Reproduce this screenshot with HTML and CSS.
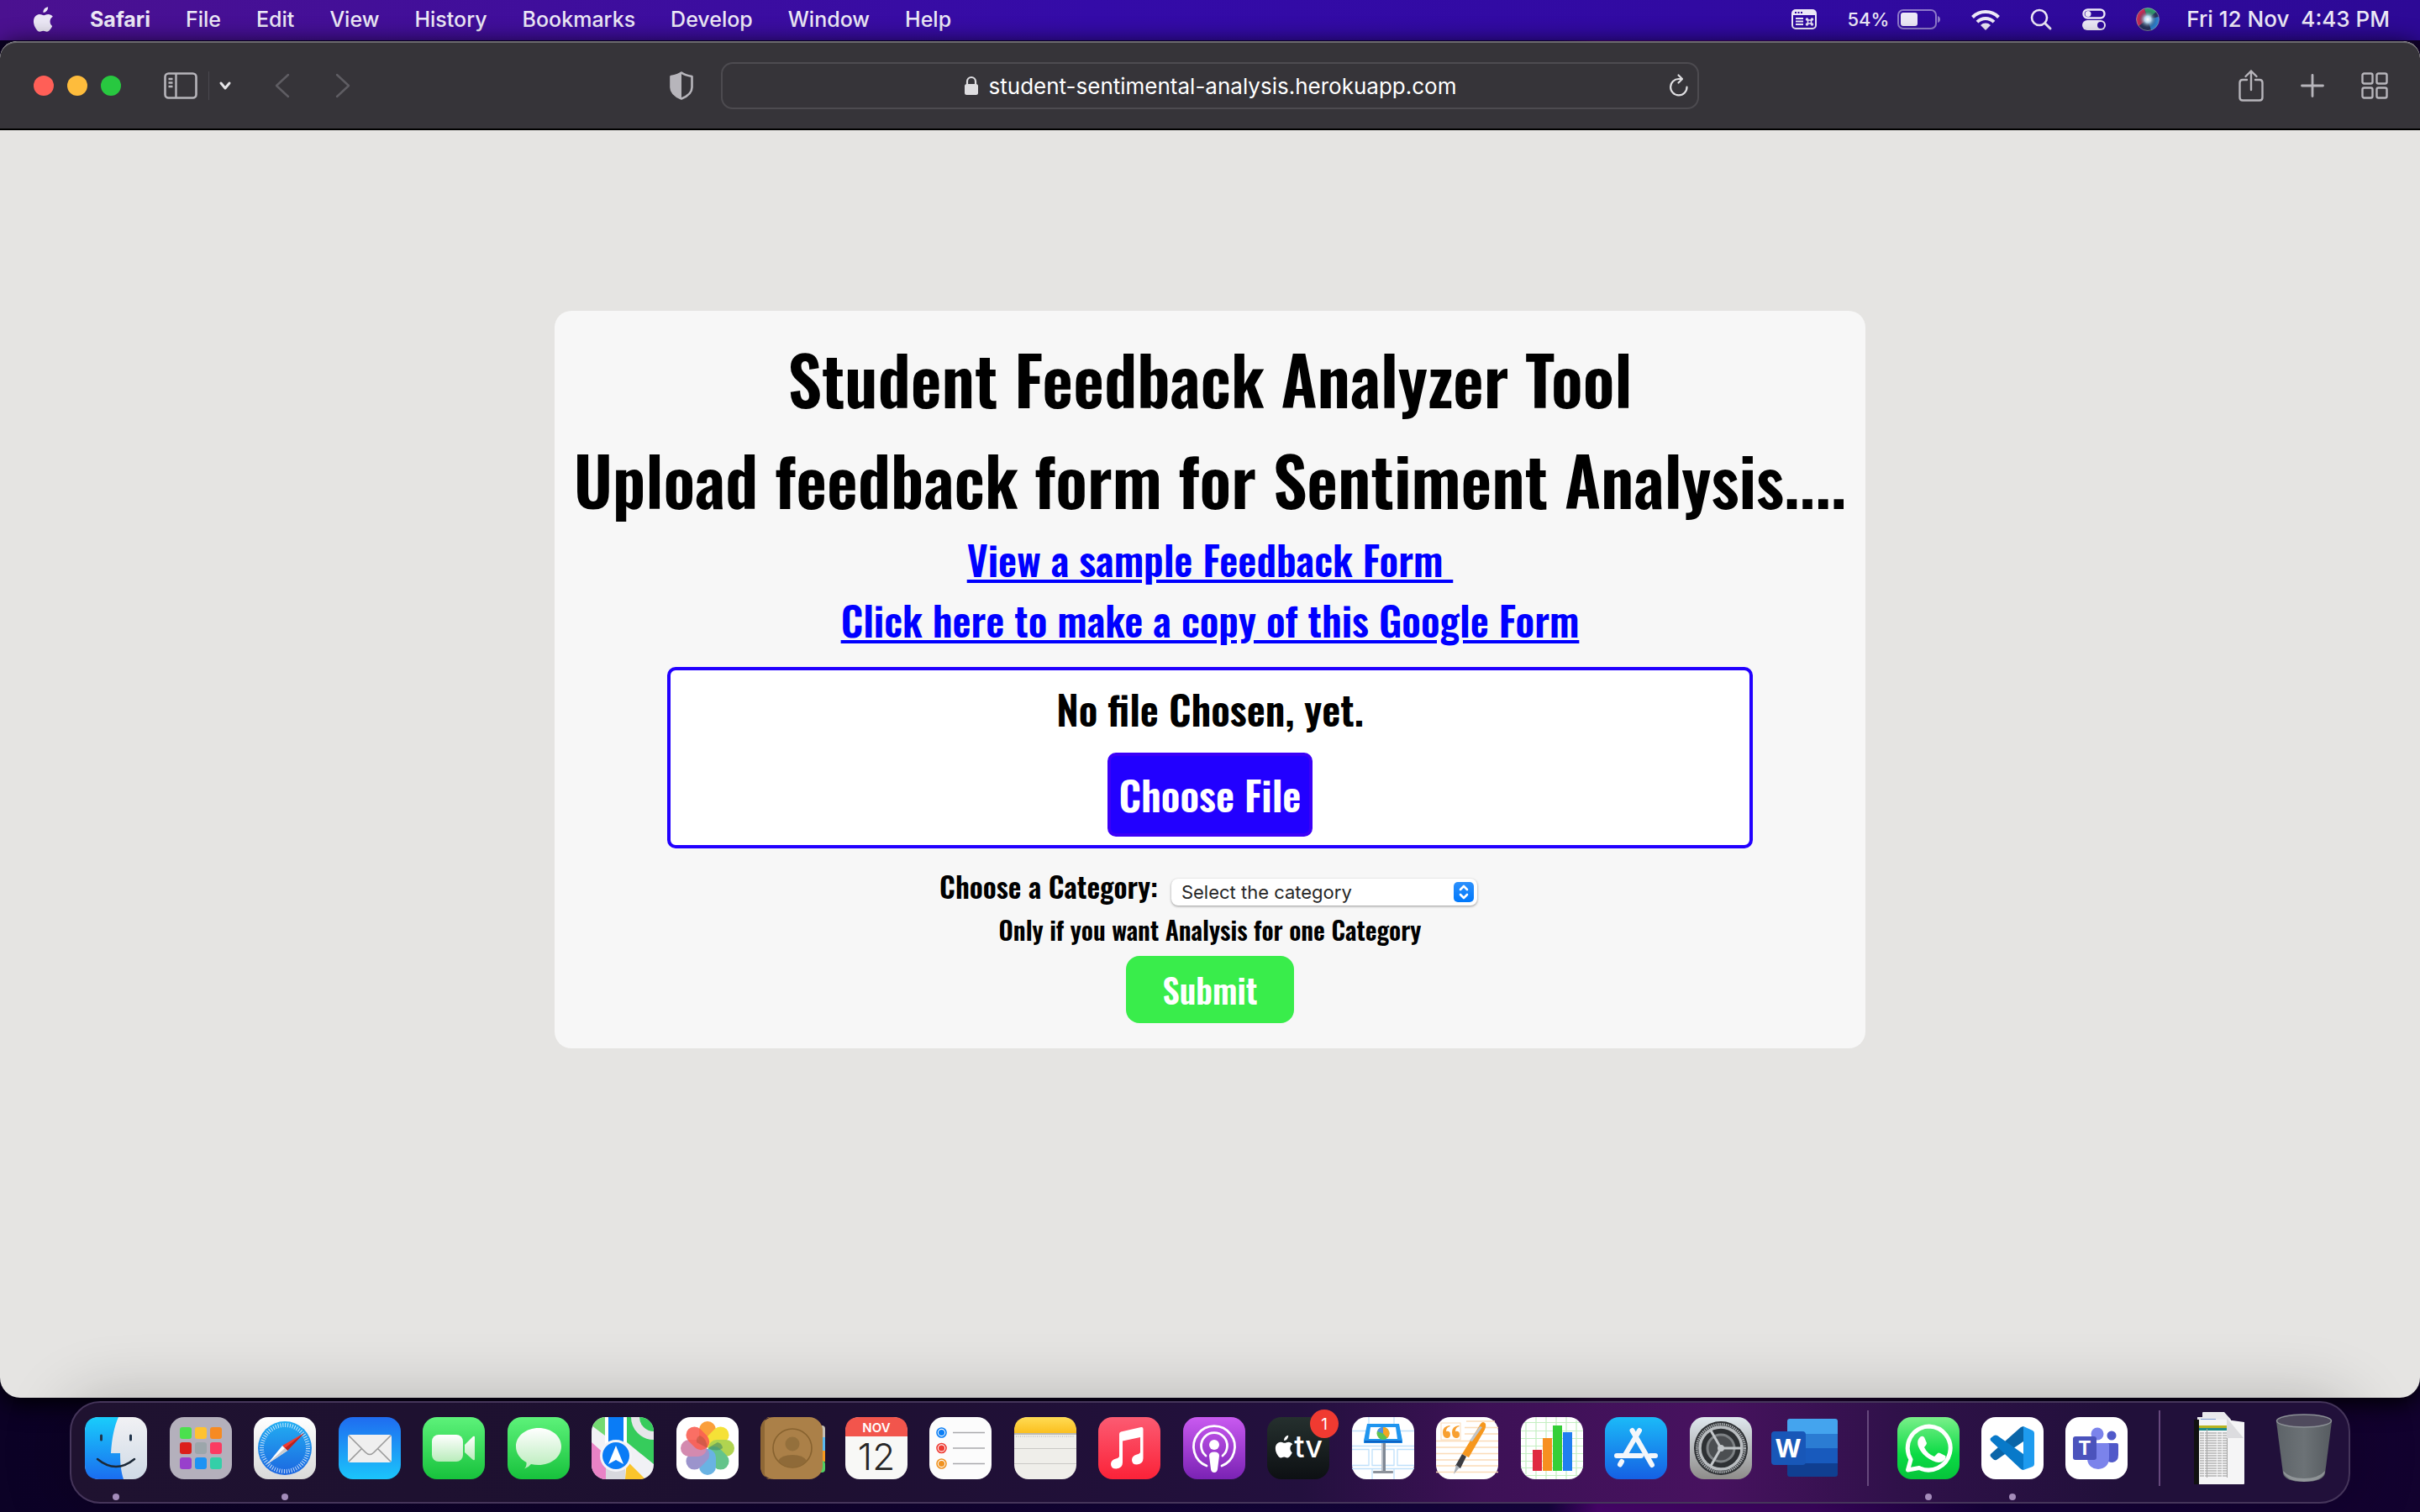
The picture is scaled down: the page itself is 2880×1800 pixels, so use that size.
FILE: index.html
```html
<!DOCTYPE html>
<html lang="en">
<head>
<meta charset="utf-8">
<title>Student Feedback Analyzer Tool</title>
<link rel="stylesheet" href="styles.css">
</head>
<body>
<header class="menubar">
  <nav class="menus" aria-label="Menu bar">
    <svg class="apple" width="26" height="32" viewBox="0 0 28 34"><path fill="currentColor" d="M19.500 1c.2 2-.6 3.900-1.700 5.200-1.200 1.300-2.800 2.200-4.400 2.100-.2-1.900.7-3.900 1.700-5 1.200-1.300 3-2.200 4.400-2.300zM25 25.500c-.7 1.600-1.100 2.300-2 3.700-1.300 2-3.100 3.800-5.100 3.800-1.700 0-2.200-1.100-4.400-1.100-2.300 0-2.800 1.100-4.500 1.100-2.100 0-3.700-2-4.900-3.900-3.500-5.300-3.900-11.500-1.700-14.800 1.500-2.400 4-3.800 6.200-3.800 2.300 0 3.800 1.300 5.700 1.300 1.900 0 3-1.300 5.700-1.300 2 0 4.200 1.100 5.700 3-5 2.800-4.200 9.900-.7 12z"/></svg>
    <button class="menu menu-app">Safari</button>
    <button class="menu">File</button>
    <button class="menu">Edit</button>
    <button class="menu">View</button>
    <button class="menu">History</button>
    <button class="menu">Bookmarks</button>
    <button class="menu">Develop</button>
    <button class="menu">Window</button>
    <button class="menu">Help</button>
  </nav>
  <div class="status">
    <svg width="30" height="24" viewBox="0 0 30 24"><rect x="1" y="1" width="28" height="22" rx="4" fill="none" stroke="currentColor" stroke-width="2"/><path fill="currentColor" d="M1 7V4q0-3 3-3h22q3 0 3 3v3z"/><path stroke="#300a9c" stroke-width="2" d="M4 4h2M7.500 4h2M11 4h2"/><path stroke="currentColor" stroke-width="2" d="M5 11h9M5 14.500h9M5 18h9"/><path fill="none" stroke="currentColor" stroke-width="1.500" d="M19.500 13h4v4h-4zM19.500 13h-1a1 1 0 1 1 1-1zM23.500 13v-1a1 1 0 1 1 1 1zM23.500 17h1a1 1 0 1 1-1 1zM19.500 17v1a1 1 0 1 1-1-1z"/></svg>
    <span class="battery"><span>54%</span><svg width="52" height="24" viewBox="0 0 52 24"><rect x="1" y="1" width="45" height="22" rx="6" fill="none" stroke="currentColor" stroke-opacity=".5" stroke-width="2"/><rect x="4" y="4" width="20" height="16" rx="3" fill="currentColor"/><path fill="currentColor" fill-opacity=".5" d="M48 8q3 1 3 4t-3 4z"/></svg></span>
    <svg width="34" height="25" viewBox="0 0 34 25"><g fill="none" stroke="currentColor" stroke-width="4"><path d="M1.500 9.500a22 22 0 0 1 31 0"/><path d="M7 15.200a14.200 14.200 0 0 1 20 0"/></g><path fill="currentColor" d="M11 19a8.600 8.600 0 0 1 12 0l-6 6z"/></svg>
    <svg width="26" height="26" viewBox="0 0 26 26"><circle cx="11" cy="11" r="9" fill="none" stroke="currentColor" stroke-width="2.600"/><path stroke="currentColor" stroke-width="3" stroke-linecap="round" d="m18 18 6 6"/></svg>
    <svg width="28" height="26" viewBox="0 0 28 26"><rect x="1.500" y="1.500" width="25" height="10" rx="5" fill="none" stroke="currentColor" stroke-width="2.400"/><circle cx="7" cy="6.500" r="3.500" fill="currentColor"/><rect y="14" width="28" height="12" rx="6" fill="currentColor"/><circle cx="22" cy="20" r="4" fill="#300a9c"/></svg>
    <svg width="28" height="28" viewBox="0 0 28 28"><defs><radialGradient id="siri"><stop offset="0" stop-color="#fff"/><stop offset=".35" stop-color="#b9d8f0"/><stop offset="1" stop-color="#234" stop-opacity="0"/></radialGradient></defs><circle cx="14" cy="14" r="14" fill="#26325c"/><path fill="#c32c55" d="M14 14 3 22A14 14 0 0 1 10 1z"/><path fill="#2f9a6c" d="M14 14 10 1a14 14 0 0 1 14 4z"/><path fill="#2b7fd0" d="m14 14 13-3a14 14 0 0 1-9 16z"/><circle cx="14" cy="14" r="11" fill="url(#siri)"/><circle cx="14" cy="14" r="13.500" fill="none" stroke="#c9b7e8" stroke-opacity=".5"/></svg>
    <time class="clock"><span>Fri 12 Nov</span><span>4:43 PM</span></time>
  </div>
</header>

<div class="window">
  <div class="toolbar">
    <div class="tools-left">
      <div class="lights"><button class="light close" aria-label="Close"></button><button class="light minimise" aria-label="Minimise"></button><button class="light zoom" aria-label="Zoom"></button></div>
      <button class="tool sidebar-tool" aria-label="Sidebar"><svg width="40" height="32" viewBox="0 0 40 32"><rect x="1.500" y="1.500" width="37" height="29" rx="4" fill="none" stroke="currentColor" stroke-width="2.600"/><path stroke="currentColor" stroke-width="2.400" d="M14.500 2v28M5.500 8h5M5.500 12.500h5M5.500 17h5"/></svg></button>
      <button class="tool chevron-tool" aria-label="Tab groups"><svg width="14" height="10" viewBox="0 0 14 10"><path fill="none" stroke="#e6e5e8" stroke-width="3" stroke-linecap="round" stroke-linejoin="round" d="m2 2 5 6 5-6"/></svg></button>
      <button class="tool dim back-tool" aria-label="Back"><svg width="18" height="30" viewBox="0 0 18 30"><path fill="none" stroke="currentColor" stroke-width="2.400" stroke-linecap="round" stroke-linejoin="round" d="M16 2 2 15l14 13"/></svg></button>
      <button class="tool dim" aria-label="Forward"><svg width="18" height="30" viewBox="0 0 18 30"><path fill="none" stroke="currentColor" stroke-width="2.400" stroke-linecap="round" stroke-linejoin="round" d="m2 2 14 13L2 28"/></svg></button>
      <button class="tool shield" aria-label="Privacy report"><svg width="28" height="34" viewBox="0 0 28 34"><path fill="none" stroke="currentColor" stroke-width="2.600" stroke-linejoin="round" d="M14 1.500c3 2.300 7 3.500 12.500 4.500v13c0 6-5 10.500-12.500 13.500C6.500 29.500 1.500 25 1.500 19V6C7 5 11 3.800 14 1.500z"/><path fill="currentColor" d="M14 1.500v31C6.500 29.500 1.500 25 1.500 19V6C7 5 11 3.800 14 1.500z"/></svg></button>
    </div>
    <div class="address">
      <svg width="18" height="24" viewBox="0 0 18 24"><path fill="none" stroke="#dedde0" stroke-width="2.200" d="M4 12V7a5 5 0 0 1 10 0v5"/><rect x="1" y="10" width="16" height="13" rx="2.500" fill="#dedde0"/></svg>
      <span>student-sentimental-analysis.herokuapp.com</span>
      <button class="tool reload" aria-label="Reload"><svg width="24" height="28" viewBox="0 0 24 28"><path fill="none" stroke="#dedde0" stroke-width="2.200" stroke-linecap="round" stroke-linejoin="round" d="M21.500 15.500A9.700 9.700 0 1 1 12 6h3.500M11.500 1.500 16 6l-4.500 4.500"/></svg></button>
    </div>
    <div class="tools-right">
      <button class="tool" aria-label="Share"><svg width="30" height="38" viewBox="0 0 30 38"><path fill="none" stroke="currentColor" stroke-width="2.400" stroke-linecap="round" stroke-linejoin="round" d="M10 12H5q-3.500 0-3.500 3.500V33q0 3.500 3.500 3.500h20q3.500 0 3.500-3.500V15.500Q28.500 12 25 12h-5M15 24V1.500M8.500 8 15 1.500 21.500 8"/></svg></button>
      <button class="tool" aria-label="New tab"><svg width="28" height="28" viewBox="0 0 28 28"><path stroke="currentColor" stroke-width="2.800" stroke-linecap="round" d="M14 1.500v25M1.500 14h25"/></svg></button>
      <button class="tool" aria-label="Tab overview"><svg width="32" height="32" viewBox="0 0 32 32"><g fill="none" stroke="currentColor" stroke-width="2.400"><rect x="1.500" y="1.500" width="12" height="12" rx="2"/><rect x="18.500" y="1.500" width="12" height="12" rx="2"/><rect x="1.500" y="18.500" width="12" height="12" rx="2"/><rect x="18.500" y="18.500" width="12" height="12" rx="2"/></g></svg></button>
    </div>
  </div>

  <main class="page">
    <form class="card">
      <h1 class="title">Student Feedback Analyzer Tool</h1>
      <h1 class="title">Upload feedback form for Sentiment Analysis....</h1>
      <a class="form-link" href="#sample">View a sample Feedback Form&nbsp;</a>
      <a class="form-link" href="#copy">Click here to make a copy of this Google Form</a>
      <div class="upload">
        <span class="file-name">No file Chosen, yet.</span>
        <button class="choose" type="button">Choose File</button>
      </div>
      <div class="category">
        <label for="category">Choose a Category:</label>
        <span class="select-wrap">
          <select id="category" class="select"><option>Select the category</option></select>
          <svg class="stepper" width="24" height="24" viewBox="0 0 24 24"><defs><linearGradient id="step" x2="0" y2="1"><stop stop-color="#2c90fc"/><stop offset="1" stop-color="#0078fb"/></linearGradient></defs><rect width="24" height="24" rx="5" fill="url(#step)"/><path fill="none" stroke="#fff" stroke-width="2.600" stroke-linecap="round" stroke-linejoin="round" d="m8 9 4-4 4 4M8 15l4 4 4-4"/></svg>
        </span>
      </div>
      <p class="hint">Only if you want Analysis for one Category</p>
      <button class="submit" type="submit">Submit</button>
    </form>
  </main>
</div>

<footer class="dock">
  <ul class="apps main-apps">
    <li class="app running" title="Finder"><svg width="74" height="74" viewBox="0 0 74 74"><defs><linearGradient id="fb" x2="0" y2="1"><stop stop-color="#19cdfb"/><stop offset="1" stop-color="#1a6df0"/></linearGradient><linearGradient id="fw" x2="0" y2="1"><stop stop-color="#f1f1f4"/><stop offset="1" stop-color="#cfdae6"/></linearGradient></defs><rect width="74" height="74" rx="17" fill="url(#fw)"/><path fill="url(#fb)" d="M17 0h23c-5 11-8 25-9 43h11c0 12 1 22 4 31H17Q0 74 0 57V17Q0 0 17 0z"/><path stroke="#20334a" stroke-width="3" stroke-linecap="round" d="M19.500 22v5M54.500 22v5"/><path fill="none" stroke="#1b2836" stroke-width="2.500" stroke-linecap="round" d="M15 50q22 18 44 0"/></svg></li>
    <li class="app" title="Launchpad"><svg width="74" height="74" viewBox="0 0 74 74"><rect width="74" height="74" rx="17" fill="#b4b0bc"/><rect x="12" y="12" width="14" height="14" rx="3" fill="#4be04e"/><rect x="30" y="12" width="14" height="14" rx="3" fill="#ffc230"/><rect x="48" y="12" width="14" height="14" rx="3" fill="#f68a22"/><rect x="12" y="30" width="14" height="14" rx="3" fill="#dc1f1a"/><rect x="30" y="30" width="14" height="14" rx="3" fill="#9ca6ab"/><rect x="48" y="30" width="14" height="14" rx="3" fill="#fb3b62"/><rect x="12" y="48" width="14" height="14" rx="3" fill="#9840cc"/><rect x="30" y="48" width="14" height="14" rx="3" fill="#1d93f4"/><rect x="48" y="48" width="14" height="14" rx="3" fill="#34cfa8"/></svg></li>
    <li class="app running" title="Safari"><svg width="74" height="74" viewBox="0 0 74 74"><defs><linearGradient id="lg" x2="0" y2="1"><stop stop-color="#fff"/><stop offset="1" stop-color="#d9d9d9"/></linearGradient><linearGradient id="sf" x2="0" y2="1"><stop stop-color="#22aef2"/><stop offset="1" stop-color="#1c66e0"/></linearGradient></defs><rect width="74" height="74" rx="17" fill="url(#lg)"/><circle cx="37" cy="37" r="32" fill="url(#sf)"/><circle cx="37" cy="37" r="27.500" fill="none" stroke="#fff" stroke-opacity=".75" stroke-width="5" stroke-dasharray="1 1.880"/><path fill="#f03b30" d="M60 19 40 40l-6-6z"/><path fill="#b92320" d="M60 19 40 40l-3-3z"/><path fill="#fff" d="M16 56 34 34l6 6z"/><path fill="#c9ccd0" d="m16 56 21-19 3 3z"/></svg></li>
    <li class="app" title="Mail"><svg width="74" height="74" viewBox="0 0 74 74"><defs><linearGradient id="ml" x2="0" y2="1"><stop stop-color="#1f6cf0"/><stop offset="1" stop-color="#1bc5fb"/></linearGradient></defs><rect width="74" height="74" rx="17" fill="url(#ml)"/><rect x="11" y="21" width="52" height="33" rx="3" fill="#efefef"/><path fill="none" stroke="#9a9a9a" stroke-width="1.600" d="m12 22 20 20q5 5 10 0l20-20M12 53l15-15M62 53 47 38"/></svg></li>
    <li class="app" title="FaceTime"><svg width="74" height="74" viewBox="0 0 74 74"><defs><linearGradient id="gr" x2="0" y2="1"><stop stop-color="#5df27a"/><stop offset="1" stop-color="#17c23c"/></linearGradient><linearGradient id="wg" x2="0" y2="1"><stop stop-color="#fff"/><stop offset="1" stop-color="#b9ecbb"/></linearGradient></defs><rect width="74" height="74" rx="17" fill="url(#gr)"/><rect x="11" y="21" width="37" height="32" rx="8" fill="url(#wg)"/><path fill="url(#wg)" d="M50 33 60 23q2-1 2 1v26q0 2-2 1L50 42z"/></svg></li>
    <li class="app" title="Messages"><svg width="74" height="74" viewBox="0 0 74 74"><rect width="74" height="74" rx="17" fill="url(#gr)"/><path fill="url(#wg)" d="M37 13c15 0 27 9.500 27 22S52 57 37 57q-5 0-9-1-3 4-8 5.500 3-3 2.500-7.500C15 50 10 43 10 35c0-12.500 12-22 27-22z"/></svg></li>
    <li class="app" title="Maps"><svg width="74" height="74" viewBox="0 0 74 74"><defs><clipPath id="sq"><rect width="74" height="74" rx="17"/></clipPath></defs><g clip-path="url(#sq)"><path fill="#f1f1f5" d="M0 0h74v74H0z"/><path fill="#74da72" d="M0 0h16v22L0 10z"/><path fill="#36cc5c" d="M42 0h32v56L42 30z"/><path fill="#e983c6" d="M0 30 18 46v28H0z"/><path fill="#fac42c" d="M42 52 64 74H40z"/><path fill="#d8d9de" d="M17 50h23v24H17z"/><circle cx="74" cy="0" r="22" fill="none" stroke="#e6e6ea" stroke-width="10"/><path fill="#fff" d="M16 0h26v40H16z"/><path fill="#0a7cf6" d="M20 0h18v40H20z"/></g><circle cx="29" cy="46" r="19" fill="#f4f4f8"/><circle cx="29" cy="46" r="16" fill="#0a7cf6"/><path fill="#fff" d="m29 34 9 22-9-5-9 5z"/></svg></li>
    <li class="app" title="Photos"><svg width="74" height="74" viewBox="0 0 74 74"><rect width="74" height="74" rx="17" fill="#fff"/><g opacity=".88"><rect x="27" y="5" width="20" height="31" rx="10" fill="#fb9220"/><rect x="27" y="5" width="20" height="31" rx="10" fill="#f4de1c" transform="rotate(45 37 37)"/><rect x="27" y="5" width="20" height="31" rx="10" fill="#a6cf38" transform="rotate(90 37 37)"/><rect x="27" y="5" width="20" height="31" rx="10" fill="#4fbc7c" transform="rotate(135 37 37)"/><rect x="27" y="5" width="20" height="31" rx="10" fill="#55a9e0" transform="rotate(180 37 37)"/><rect x="27" y="5" width="20" height="31" rx="10" fill="#8e86c6" transform="rotate(225 37 37)"/><rect x="27" y="5" width="20" height="31" rx="10" fill="#cd7ba4" transform="rotate(270 37 37)"/><rect x="27" y="5" width="20" height="31" rx="10" fill="#fa4a3c" fill-opacity=".9" transform="rotate(315 37 37)"/><path fill="#a63a20" fill-opacity=".5" d="M37 37 24 30q-1-6 4-8 8 3 9 15z"/><path fill="#2d7b50" fill-opacity=".6" d="m37 37 12-7q6 2 6 7-6 5-18 0z"/></g></svg></li>
    <li class="app" title="Contacts"><svg width="78" height="74" viewBox="0 0 78 74"><rect x="60" y="10" width="17" height="18" rx="4" fill="#c5bfb5"/><rect x="60" y="24" width="17" height="17" fill="#5ab8ee"/><rect x="60" y="40" width="17" height="13" fill="#f79a1e"/><rect x="60" y="52" width="17" height="14" rx="4" fill="#52cf62"/><rect width="74" height="74" rx="16" fill="#ab8048"/><path fill="#8f6836" d="M16 0Q0 0 0 16v42q0 16 16 16h-7q-4-2-4-8V8q0-6 4-8z"/><g fill="none" stroke="#87622f" stroke-width="1.600"><circle cx="38" cy="37" r="23"/></g><circle cx="38" cy="32" r="8.500" fill="#94703c"/><path fill="#8f6a38" d="M21 52q4-7 17-7t17 7q-7 8-17 8t-17-8z"/></svg></li>
    <li class="app" title="Calendar"><svg width="74" height="74" viewBox="0 0 74 74"><rect width="74" height="74" rx="17" fill="#f8f8f6"/><path fill="#f2554c" d="M0 23v-6Q0 0 17 0h40q17 0 17 17v6z"/><text class="cal-month" x="37" y="18">NOV</text><text class="cal-day" x="37" y="63">12</text></svg></li>
    <li class="app" title="Reminders"><svg width="74" height="74" viewBox="0 0 74 74"><rect width="74" height="74" rx="17" fill="#fcfcfc"/><path stroke="#a9a9ac" stroke-width="1.600" d="M28 18.500h38M28 37h38M28 55.500h38"/><g fill="none" stroke-width="1.600"><circle cx="14.500" cy="18.500" r="5.500" stroke="#0a7ef5"/><circle cx="14.500" cy="37" r="5.500" stroke="#ee3b33"/><circle cx="14.500" cy="55.500" r="5.500" stroke="#f09220"/></g><circle cx="14.500" cy="18.500" r="3.600" fill="#0a7ef5"/><circle cx="14.500" cy="37" r="3.600" fill="#ee3b33"/><circle cx="14.500" cy="55.500" r="3.600" fill="#f09220"/></svg></li>
    <li class="app" title="Notes"><svg width="74" height="74" viewBox="0 0 74 74"><defs><linearGradient id="nt" x2="0" y2="1"><stop stop-color="#ffdc55"/><stop offset="1" stop-color="#fbbf1e"/></linearGradient></defs><rect width="74" height="74" rx="17" fill="#efeeea"/><path fill="url(#nt)" d="M0 19v-2Q0 0 17 0h40q17 0 17 17v2z"/><path stroke="#a9a69f" stroke-width="1.400" d="M0 20h74"/><path stroke="#aaa" stroke-width="1.200" stroke-dasharray="1 1.500" d="M2 23h70"/><path stroke="#c9c8c6" stroke-width="1.200" d="M0 37.500h74M0 55.500h74"/></svg></li>
    <li class="app" title="Music"><svg width="74" height="74" viewBox="0 0 74 74"><defs><linearGradient id="ms" x2="0" y2="1"><stop stop-color="#fc5b72"/><stop offset="1" stop-color="#fb2238"/></linearGradient></defs><rect width="74" height="74" rx="17" fill="url(#ms)"/><path fill="#fff" d="M25 20q0-2 2-2.500L51 12q2.500-.4 2.500 2v35q0 7-7.500 7.500-6 0-6-5.500 0-5 6-6.500 4-.8 4-3V24l-21 4.500V54q0 7-7.500 7.500-6.500 0-6.500-5.500 0-5 6-6.500 4-.8 4-3z"/></svg></li>
    <li class="app" title="Podcasts"><svg width="74" height="74" viewBox="0 0 74 74"><defs><linearGradient id="pc" x2="0" y2="1"><stop stop-color="#c95af0"/><stop offset="1" stop-color="#7a22b4"/></linearGradient></defs><rect width="74" height="74" rx="17" fill="url(#pc)"/><g fill="none" stroke="#fff" stroke-width="2.800" stroke-linecap="round"><path d="M28 58a24.500 24.500 0 1 1 18 0"/><path d="M27 46a15.500 15.500 0 1 1 20 0"/></g><circle cx="37" cy="33" r="6" fill="#fff"/><path fill="#fff" d="M31 46q0-4.500 6-4.500t6 4.500l-2 16q-.6 4-4 4t-4-4z"/></svg></li>
    <li class="app" title="TV"><svg width="86" height="74" viewBox="0 0 86 74"><defs><linearGradient id="tv" x2="0" y2="1"><stop stop-color="#25302e"/><stop offset="1" stop-color="#0d1013"/></linearGradient></defs><rect width="74" height="74" rx="17" fill="url(#tv)"/><path fill="#fff" transform="translate(9 21) scale(.83)" d="M19.500 1c.2 2-.6 3.900-1.700 5.200-1.200 1.300-2.800 2.200-4.400 2.100-.2-1.900.7-3.900 1.700-5 1.200-1.300 3-2.200 4.400-2.300zM25 25.500c-.7 1.600-1.100 2.300-2 3.700-1.300 2-3.100 3.800-5.100 3.800-1.700 0-2.200-1.100-4.400-1.100-2.300 0-2.800 1.100-4.500 1.100-2.100 0-3.700-2-4.900-3.900-3.500-5.300-3.900-11.500-1.700-14.800 1.500-2.400 4-3.800 6.200-3.800 2.300 0 3.800 1.300 5.700 1.300 1.900 0 3-1.300 5.700-1.300 2 0 4.200 1.100 5.700 3-5 2.800-4.200 9.900-.7 12z"/><text class="tv-label" x="49" y="48">tv</text><circle cx="68" cy="8" r="17" fill="#f03a31"/><text class="badge-label" x="68" y="15">1</text></svg></li>
    <li class="app" title="Keynote"><svg width="74" height="74" viewBox="0 0 74 74"><rect width="74" height="74" rx="17" fill="#fff"/><path fill="none" stroke="#bfe0fa" stroke-width="1.300" d="M0 16.500h74M0 34.500h74M0 38.500h20v19H0M24 38.500h26v19H24zM74 38.500H54v19h20M0 61.500h74M20 0v8M50 0v8M24 62v12M50 62v12"/><path fill="#7f8894" d="M35 30h5v35h-5z"/><path fill="#b9bfc7" d="M35 30h2v35h-2z"/><rect x="25" y="64" width="24" height="3" rx="1" fill="#8d939b"/><path fill="#1f95ef" d="M18 8h38l4 20v3H14v-3z"/><path fill="#0d62c4" d="M15 28h44v2.500H15z"/><path fill="#fff" d="M22 12h30l2 14H20z"/><circle cx="37" cy="19.500" r="7.500" fill="#5ec350"/><path fill="#f5a623" d="M37 19.500V12a7.500 7.500 0 0 1 5 13z"/><path fill="#4d91e6" d="M37 19.500 30 17a7.500 7.500 0 0 1 7-5z"/></svg></li>
    <li class="app" title="Pages"><svg width="74" height="74" viewBox="0 0 74 74"><rect width="74" height="74" rx="17" fill="#fff"/><path stroke="#fbdcb8" stroke-width="1.300" d="M36 5h34M34 12.500h40M34 20h40M0 28.500h74M0 36h74M0 43.500h74M0 51h74M0 58h74M0 65.500h74"/><rect x="6" y="7" width="23" height="20" fill="none" stroke="#fbdcb8"/><path fill="#f8a030" d="M17 11q-5 1-5 6 5-1 5 4 0 4-4 4-5 0-5-7 0-7 8-8zM28 11q-5 1-5 6 5-1 5 4 0 4-4 4-5 0-5-7 0-7 8-8z"/><path fill="#f6971d" d="M53 8q3-4 6 0 1 3-1 7L39 48l-8-4z"/><path fill="#bfc5cc" d="m52 11 3 1-12 17-3-1z"/><path fill="#3c3c40" d="m31 44 5 3-7 14-6-3z"/><path fill="#a9afb6" d="m24 57 4 3-7 8z"/></svg></li>
    <li class="app" title="Numbers"><svg width="74" height="74" viewBox="0 0 74 74"><rect width="74" height="74" rx="17" fill="#fff"/><path stroke="#c4efc2" stroke-width="1.200" d="M4 6.500h66M0 16.500h74M0 25.500h74M0 34.500h74M0 43.500h74M0 52.500h74M0 60.500h74M6 69.500h62M6 6v62M18 0v74M30 0v74M42 0v74M54 0v74M66 4v66"/><rect x="14" y="39" width="11" height="25" fill="#e02a40"/><rect x="26" y="25" width="11" height="39" fill="#f78f20"/><rect x="38" y="10" width="11" height="54" fill="#35cf38"/><rect x="50" y="18" width="11" height="46" fill="#1f7ff0"/></svg></li>
    <li class="app" title="App Store"><svg width="74" height="74" viewBox="0 0 74 74"><defs><linearGradient id="as" x2="0" y2="1"><stop stop-color="#1bbaf8"/><stop offset="1" stop-color="#1560e4"/></linearGradient></defs><rect width="74" height="74" rx="17" fill="url(#as)"/><g stroke="#f4f7fb" stroke-width="6" stroke-linecap="round"><path d="M41 16 24 45M32.500 16 56 57M14 46h29M54 46h6M20 53l-2 3.500"/></g></svg></li>
    <li class="app" title="System Preferences"><svg width="74" height="74" viewBox="0 0 74 74"><defs><linearGradient id="st" x2="0" y2="1"><stop stop-color="#dfe8ee"/><stop offset="1" stop-color="#8e8c8a"/></linearGradient></defs><rect width="74" height="74" rx="17" fill="url(#st)"/><circle cx="37" cy="37" r="32" fill="#2e3134"/><circle cx="37" cy="37" r="28.500" fill="none" stroke="#a7abae" stroke-width="3" stroke-dasharray="1.500 1"/><circle cx="37" cy="37" r="25" fill="none" stroke="#b9bdc0" stroke-width="3.500"/><circle cx="37" cy="37" r="16" fill="#4b4e51" stroke="#7d8184" stroke-width="3"/><g stroke="#c3c7ca" stroke-width="3"><path d="M37 37h24M37 37 25 16M37 37 25 58"/></g><circle cx="37" cy="37" r="4" fill="#c3c7ca"/></svg></li>
    <li class="app app-wide" title="Word"><svg width="80" height="74" viewBox="0 0 80 74"><path fill="#44a4ee" d="M22 2h54q3 0 3 3v15H19V5q0-3 3-3z"/><path fill="#2b7cd3" d="M19 20h60v17H19z"/><path fill="#185abd" d="M19 37h60v18H19z"/><path fill="#103f91" d="M19 55h60v13q0 3-3 3H22q-3 0-3-3z"/><rect y="17" width="41" height="40" rx="4" fill="#1857b8"/><text class="word-label" x="20" y="48">W</text></svg></li>
  </ul>
  <span class="divider"></span>
  <ul class="apps">
    <li class="app running" title="WhatsApp"><svg width="74" height="74" viewBox="0 0 74 74"><defs><linearGradient id="wa" x2="0" y2="1"><stop stop-color="#7af08a"/><stop offset=".6" stop-color="#0bdb45"/><stop offset="1" stop-color="#06c43a"/></linearGradient></defs><rect width="74" height="74" rx="17" fill="url(#wa)"/><path fill="none" stroke="#fff" stroke-width="5" stroke-linejoin="round" d="M38 11a26 26 0 1 1-12 49.500L12.500 63 16 50.500A26 26 0 0 1 38 11z"/><path fill="#fff" d="M26 25q3-4 6-1l3 7q0 2-3 5 4 8 12 11l4-4q1-1 3 0l6 3q2 2-2 6-5 4-13 0-13-6-17-17-2-6 1-10z"/></svg></li>
    <li class="app running" title="Visual Studio Code"><svg width="74" height="74" viewBox="0 0 74 74"><rect width="74" height="74" rx="17" fill="#fff"/><path fill="#0a65a8" d="M50 11v18L18 51q-2 1-4-1l-3-3q-1-2 0-3l36-32z"/><path fill="#0879c9" d="M11 28q-1-2 0-3l4-3q2-1 4 0l31 22v19q-2 0-4-2z"/><path fill="#1e9bef" d="m50 11 11 5q2 1 2 3v37q0 2-2 3l-11 4z"/></svg></li>
    <li class="app" title="Teams"><svg width="74" height="74" viewBox="0 0 74 74"><rect width="74" height="74" rx="17" fill="#fff"/><circle cx="55" cy="22" r="5.500" fill="#5059c9"/><path fill="#5059c9" d="M50 31h11q2 0 2 2v12q0 8-7 9-6 0-8-4z"/><circle cx="38" cy="20" r="7.500" fill="#7b83eb"/><path fill="#7b83eb" d="M28 31h22q2 0 2 2v15q0 13-13 14-12-1-13-12z"/><rect x="9" y="23" width="28" height="28" rx="3" fill="#4b53bc"/><text class="teams-label" x="23" y="45">T</text></svg></li>
  </ul>
  <span class="divider"></span>
  <ul class="apps">
    <li class="app" title="Documents"><svg width="74" height="86" viewBox="0 0 74 86"><path fill="#e9e9ec" d="M10 8V6h6V1q0-1 1-1h25l8 9v8H10z"/><path fill="#f5f5f6" d="M8 9h36l22 3v73q0 1-1 1H8z"/><path fill="#111" d="M6 9h6v77H6z"/><path fill="#b9b520" d="M12 16h33v3H12z"/><path fill="#1f8c8a" d="M12 19h33v3H12z"/><path stroke="#b4b4b4" stroke-width="1.500" stroke-dasharray="5 1 14 1" d="M13 25h32M13 28h32M13 31h32M13 34h32M13 37h32M13 40h32M13 43h32M13 46h32M13 49h32M13 52h32M13 55h32M13 58h32M13 61h32M13 64h32M13 67h32M13 70h32M13 73h32M13 76h32"/><path fill="none" stroke="#7d9bd0" d="M14 8.500h18"/><path stroke="#a5a5a5" d="M21.500 20v58M45.500 20v58"/><path fill="#dcdcdf" d="M45 7v24h20z"/></svg></li>
    <li class="app" title="Trash"><svg width="74" height="82" viewBox="0 0 74 82"><defs><linearGradient id="tr"><stop stop-color="#5d6368"/><stop offset=".5" stop-color="#6c7276"/><stop offset="1" stop-color="#565b60"/></linearGradient></defs><path fill="url(#tr)" d="M4 9h66l-8 62q-2 10-25 10T12 71z"/><ellipse cx="37" cy="8.500" rx="32.500" ry="7.500" fill="#4f4a5d" stroke="#8c9196" stroke-width="1.500"/><path fill="#b9bdc0" fill-opacity=".5" d="M12 68q8 9 25 9t25-9q-1 12-25 13-23-1-25-13z"/></svg></li>
  </ul>
</footer>
</body>
</html>
```
FILE: styles.css
```css
* { box-sizing: border-box; }

body {
  margin: 0;
  min-height: 100vh;
  display: flex;
  flex-direction: column;
  font-family: Inter, "Liberation Sans", sans-serif;
  background: linear-gradient(90deg, #0c0226 0%, #10032e 30%, #160440 64%, #4b0570 66%, #3c0560 75%, #17023c 82%, #12022e 100%);
}

button { border: 0; padding: 0; background: none; color: inherit; font: inherit; }
svg { display: block; flex: none; overflow: visible; }

/* Menu bar */
.menubar {
  height: 48px;
  display: flex;
  align-items: center;
  justify-content: space-between;
  padding: 0 36px 2px 39px;
  color: #ece8f6;
  font-size: 25px;
  font-weight: 500;
  background: linear-gradient(90deg, #4b1190, #340ba8 45%, #310aa2 70%, #2d0996);
}
.menus { display: flex; align-items: center; gap: 42px; }
.menu { line-height: 46px; }
.menu-app { font-weight: 700; }
.status { display: flex; align-items: center; gap: 36px; }
.battery { display: flex; align-items: center; gap: 10px; font-size: 22px; }
.clock { display: flex; gap: 14px; margin-left: -4px; font-size: 26px; line-height: 46px; }

/* Browser window */
.window {
  flex: 1;
  display: flex;
  flex-direction: column;
  margin-top: 1px;
  border-radius: 20px 20px 24px 24px;
  overflow: hidden;
  background: #e5e4e2;
  box-shadow: 0 6px 30px #000;
}
.toolbar {
  height: 106px;
  display: grid;
  grid-template-columns: 1fr 1164px 1fr;
  align-items: center;
  padding: 0 38px;
  color: #b7b5bb;
  background: #363439;
  border-top: 2px solid #6b696e;
  border-bottom: 2px solid #000;
  border-radius: 20px 20px 0 0;
}
.tool { display: flex; }
.dim { color: #5f5d63; }
.tools-left { display: flex; align-items: center; padding-left: 2px; }
.lights { display: flex; gap: 16px; }
.light { width: 24px; height: 24px; border-radius: 50%; }
.close { background: #ff5f57; }
.minimise { background: #febc3c; }
.zoom { background: #28c840; }
.sidebar-tool { margin-left: 51px; }
.chevron-tool { margin-left: 13px; padding: 12px 0 12px 12px; border-left: 1px solid #4a484e; }
.back-tool { margin: 0 54px 0 52px; }
.shield { margin-left: auto; margin-right: 33px; }
.address {
  position: relative;
  height: 56px;
  display: flex;
  align-items: center;
  justify-content: center;
  gap: 12px;
  color: #fff;
  font-size: 26px;
  border: 2px solid #4d4b50;
  border-radius: 14px;
}
.reload { position: absolute; right: 10px; }
.tools-right { display: flex; align-items: center; justify-content: flex-end; gap: 44px; }

/* Web page */
.page {
  flex: 1;
  display: flex;
  align-items: flex-start;
  justify-content: center;
  padding: 215px 40px 80px;
  font-family: Oswald, "Roboto Condensed", sans-serif;
  font-weight: 600;
}
.card {
  width: 100%;
  max-width: 1560px;
  display: flex;
  flex-direction: column;
  align-items: center;
  padding: 20px 0 30px;
  border-radius: 20px;
  background: #f7f7f7;
  color: #000;
}
.title { margin: 0; font-size: 80px; line-height: 120px; font-weight: inherit; }
.form-link { font-size: 48px; line-height: 72px; color: #00f; text-decoration: underline; }
.upload {
  align-self: stretch;
  display: flex;
  flex-direction: column;
  align-items: center;
  gap: 16px;
  margin: 20px 134px 17px;
  padding: 10px 0;
  font-size: 48px;
  line-height: 72px;
  border: 4px solid #20f;
  border-radius: 10px;
  background: #fff;
}
.choose {
  padding: 10px;
  color: #fff;
  border: 4px solid #3b00f8;
  border-radius: 10px;
  background: #20f;
}
.category { display: flex; align-items: baseline; gap: 16px; padding-right: 4px; font-size: 34px; line-height: 56px; }
.select-wrap { position: relative; display: flex; }
.select {
  width: 364px;
  height: 32px;
  padding: 0 12px;
  appearance: none;
  border: 0;
  border-radius: 8px;
  background: #fff;
  color: #262626;
  font: 22px Inter, "Liberation Sans", sans-serif;
  box-shadow: 0 1px 3px rgba(0, 0, 0, .4);
}
.stepper { position: absolute; right: 4px; top: 4px; pointer-events: none; }
.hint { margin: 0 0 7px; font-size: 30px; line-height: 48px; }
.submit {
  width: 200px;
  padding: 10px 0;
  font-size: 40px;
  line-height: 60px;
  color: #fff;
  border-radius: 16px;
  background: #39ed4b;
}

/* Dock */
.dock {
  display: flex;
  align-items: center;
  height: 122px;
  margin: 4px 83px 10px;
  padding: 0 16px 10px;
  border: 2px solid #45355a;
  border-radius: 36px;
  background: linear-gradient(90deg, #1f1230, #1d1030 30%, #23103e 54%, #3d1156 62%, #47125f 72%, #30114a 80%, #21103a 90%, #21103a);
  box-shadow: 0 0 80px rgba(0, 0, 0, .24);
}
.apps { display: flex; gap: 26px; margin: 0; padding: 0; list-style: none; }
.main-apps { flex: 1; justify-content: space-between; gap: 0; }
.app {
  position: relative;
  width: 74px;
  height: 74px;
  display: flex;
  align-items: center;
}
.app-wide { justify-content: center; }
.running::after {
  content: "";
  position: absolute;
  left: 33px;
  bottom: -25px;
  width: 8px;
  height: 8px;
  border-radius: 50%;
  background: #a48cba;
}
.divider { width: 2px; height: 90px; margin: 0 34px 0 37px; background: #66497c; }

text { font-family: Inter, "Liberation Sans", sans-serif; text-anchor: middle; }
.cal-month { font-size: 15px; font-weight: 600; fill: #fff; }
.cal-day { font-size: 44px; font-weight: 300; fill: #262626; }
.tv-label { font-size: 36px; font-weight: 500; fill: #fff; }
.badge-label { font-size: 19px; fill: #fff; }
.word-label { font-size: 30px; font-weight: 700; fill: #fff; }
.teams-label { font-size: 23px; font-weight: 700; fill: #fff; }
```
